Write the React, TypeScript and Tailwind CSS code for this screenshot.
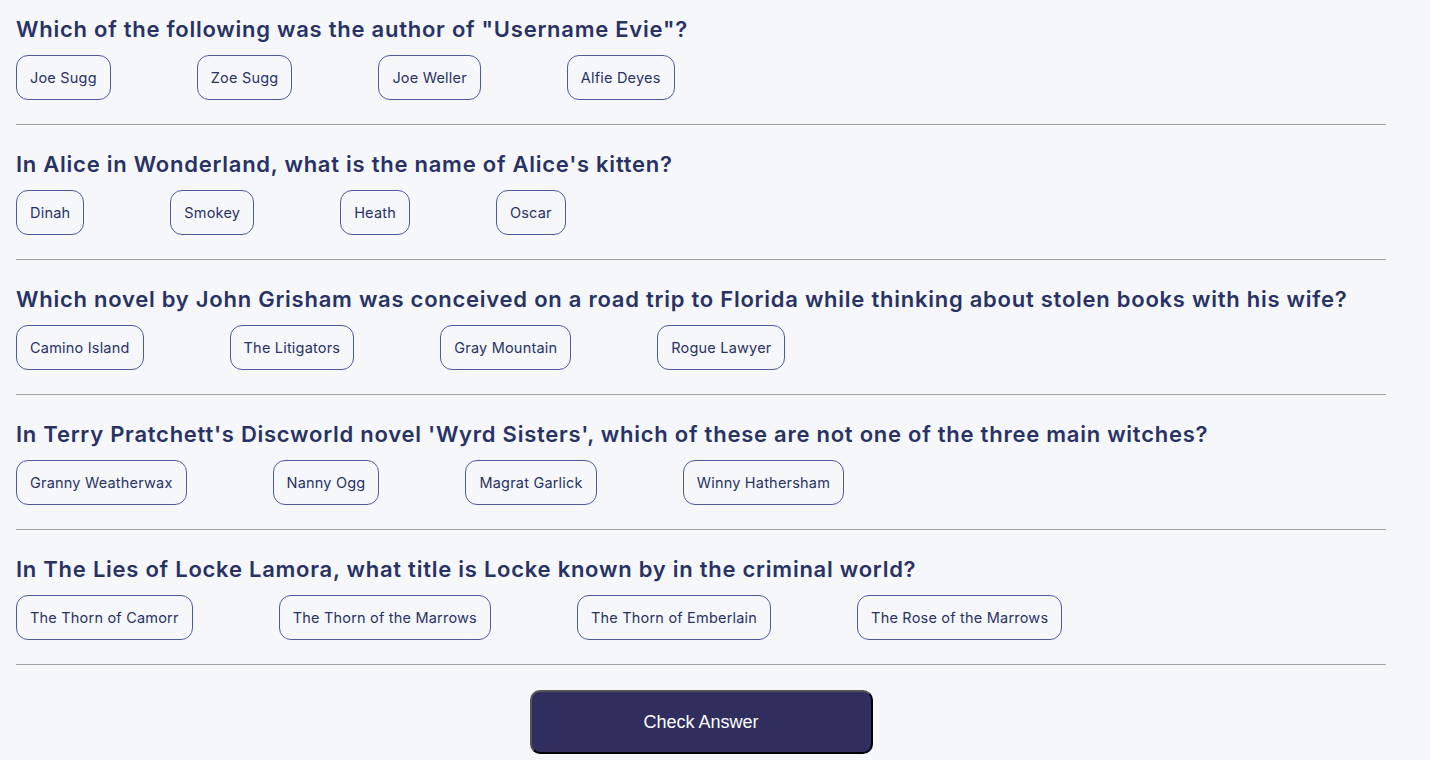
import React from "react";

const questions = [
  {
    q: 'Which of the following was the author of "Username Evie"?',
    a: ["Joe Sugg", "Zoe Sugg", "Joe Weller", "Alfie Deyes"],
  },
  {
    q: "In Alice in Wonderland, what is the name of Alice's kitten?",
    a: ["Dinah", "Smokey", "Heath", "Oscar"],
  },
  {
    q: "Which novel by John Grisham was conceived on a road trip to Florida while thinking about stolen books with his wife?",
    a: ["Camino Island", "The Litigators", "Gray Mountain", "Rogue Lawyer"],
  },
  {
    q: "In Terry Pratchett's Discworld novel 'Wyrd Sisters', which of these are not one of the three main witches?",
    a: ["Granny Weatherwax", "Nanny Ogg", "Magrat Garlick", "Winny Hathersham"],
  },
  {
    q: "In The Lies of Locke Lamora, what title is Locke known by in the criminal world?",
    a: [
      "The Thorn of Camorr",
      "The Thorn of the Marrows",
      "The Thorn of Emberlain",
      "The Rose of the Marrows",
    ],
  },
];

export default function App() {
  return (
    <div
      className="min-h-[760px] bg-[#f5f7fb] pt-[15px]"
      style={{ fontFamily: "Inter, 'Noto Sans', sans-serif" }}
    >
      <div className="ml-4 w-[1370px]">
        {questions.map((item, i) => (
          <div key={i} className={i === 0 ? "" : "pt-[25px]"}>
            <h2 className="text-[22px] leading-[28px] font-semibold tracking-[0.75px] text-[#293264] whitespace-nowrap">
              {item.q}
            </h2>
            <div className="mt-3 flex gap-[86px]">
              {item.a.map((ans) => (
                <button
                  key={ans}
                  className="h-[45px] px-[13px] rounded-xl border border-[#4d5b9e] text-[14.5px] tracking-[0.2px] text-[#293264] bg-transparent flex items-center whitespace-nowrap"
                >
                  {ans}
                </button>
              ))}
            </div>
            <div className="mt-6 h-px bg-[#a3a3a3]" />
          </div>
        ))}
        <div className="flex justify-center pt-[25px]">
          <button
            className="w-[343px] h-[64px] rounded-[10px] bg-[#2f2e5f] text-white text-[18px] border-2 border-t-[#555] border-l-[#555] border-r-black border-b-black"
            style={{ fontFamily: "'Liberation Sans', Arial, sans-serif" }}
          >
            Check Answer
          </button>
        </div>
      </div>
    </div>
  );
}
